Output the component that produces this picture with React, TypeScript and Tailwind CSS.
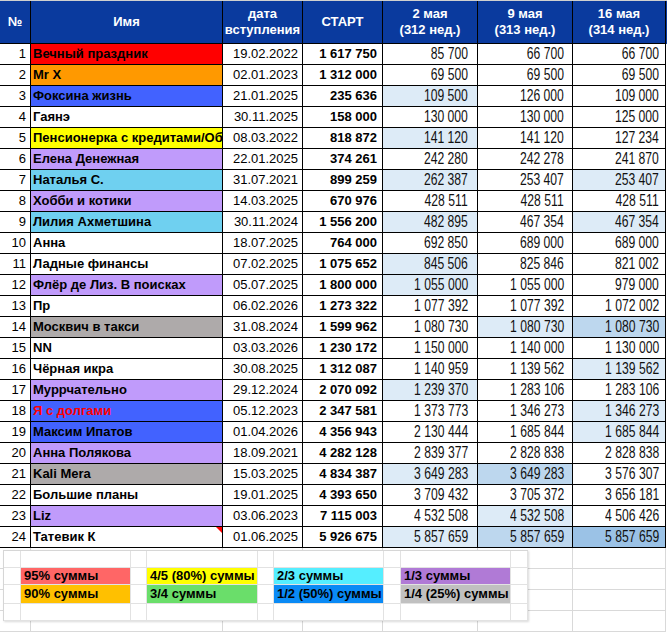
import React from "react";

type Row = {
  n: number;
  name: string;
  bg: string;
  fg?: string;
  date: string;
  start: string;
  v: [string, string, string];
  h: [string, string, string];
};

const L = "bg-[#ddebf7]";
const M = "bg-[#bdd7ee]";
const D = "bg-[#9bc2e6]";
const W = "bg-white";

const RED = "bg-[#ff0000]";
const ORG = "bg-[#ff9900]";
const BLU = "bg-[#4262ff]";
const YEL = "bg-[#ffff00]";
const LAV = "bg-[#c09bfb]";
const CYA = "bg-[#6fd0f0]";
const GRY = "bg-[#aeaaaa]";

const rows: Row[] = [
  { n: 1, name: "Вечный праздник", bg: RED, date: "19.02.2022", start: "1 617 750", v: ["85 700", "66 700", "66 700"], h: [W, W, W] },
  { n: 2, name: "Mr X", bg: ORG, date: "02.01.2023", start: "1 312 000", v: ["69 500", "69 500", "69 500"], h: [W, W, W] },
  { n: 3, name: "Фоксина жизнь", bg: BLU, date: "21.01.2025", start: "235 636", v: ["109 500", "126 000", "109 000"], h: [L, W, W] },
  { n: 4, name: "Гаянэ", bg: W, date: "30.11.2025", start: "158 000", v: ["130 000", "130 000", "125 000"], h: [W, W, W] },
  { n: 5, name: "Пенсионерка с кредитами/Обо", bg: YEL, date: "08.03.2022", start: "818 872", v: ["141 120", "141 120", "127 234"], h: [L, W, W] },
  { n: 6, name: "Елена Денежная", bg: LAV, date: "22.01.2025", start: "374 261", v: ["242 280", "242 278", "241 870"], h: [W, W, W] },
  { n: 7, name: "Наталья С.", bg: CYA, date: "31.07.2021", start: "899 259", v: ["262 387", "253 407", "253 407"], h: [L, W, L] },
  { n: 8, name: "Хобби и котики", bg: LAV, date: "14.03.2025", start: "670 976", v: ["428 511", "428 511", "428 511"], h: [W, W, W] },
  { n: 9, name: "Лилия Ахметшина", bg: CYA, date: "30.11.2024", start: "1 556 200", v: ["482 895", "467 354", "467 354"], h: [L, W, L] },
  { n: 10, name: "Анна", bg: W, date: "18.07.2025", start: "764 000", v: ["692 850", "689 000", "689 000"], h: [W, W, W] },
  { n: 11, name: "Ладные финансы", bg: W, date: "07.02.2025", start: "1 075 652", v: ["845 506", "825 846", "821 002"], h: [L, W, W] },
  { n: 12, name: "Флёр де Лиз. В поисках", bg: LAV, date: "05.07.2025", start: "1 800 000", v: ["1 055 000", "1 055 000", "979 000"], h: [L, W, W] },
  { n: 13, name: "Пр", bg: W, date: "06.02.2026", start: "1 273 322", v: ["1 077 392", "1 077 392", "1 072 002"], h: [W, W, W] },
  { n: 14, name: "Москвич в такси", bg: GRY, date: "31.08.2024", start: "1 599 962", v: ["1 080 730", "1 080 730", "1 080 730"], h: [W, L, M] },
  { n: 15, name: "NN", bg: W, date: "03.03.2026", start: "1 230 172", v: ["1 150 000", "1 140 000", "1 130 000"], h: [W, W, W] },
  { n: 16, name: "Чёрная икра", bg: W, date: "30.08.2025", start: "1 312 087", v: ["1 140 959", "1 139 562", "1 139 562"], h: [W, W, L] },
  { n: 17, name: "Муррчательно", bg: LAV, date: "29.12.2024", start: "2 070 092", v: ["1 239 370", "1 283 106", "1 283 106"], h: [L, W, W] },
  { n: 18, name: "Я с долгами", bg: BLU, fg: "text-[#ff0000]", date: "05.12.2023", start: "2 347 581", v: ["1 373 773", "1 346 273", "1 346 273"], h: [W, W, L] },
  { n: 19, name: "Максим Ипатов", bg: BLU, date: "01.04.2026", start: "4 356 943", v: ["2 130 444", "1 685 844", "1 685 844"], h: [W, W, L] },
  { n: 20, name: "Анна Полякова", bg: LAV, date: "18.09.2021", start: "4 282 128", v: ["2 839 377", "2 828 838", "2 828 838"], h: [W, W, W] },
  { n: 21, name: "Kali Mera", bg: GRY, date: "15.03.2025", start: "4 834 387", v: ["3 649 283", "3 649 283", "3 576 307"], h: [L, M, W] },
  { n: 22, name: "Большие планы", bg: W, date: "19.01.2025", start: "4 393 650", v: ["3 709 432", "3 705 372", "3 656 181"], h: [W, W, W] },
  { n: 23, name: "Liz", bg: LAV, date: "03.06.2023", start: "7 115 003", v: ["4 532 508", "4 532 508", "4 506 426"], h: [W, L, W] },
  { n: 24, name: "Татевик К", bg: W, date: "01.06.2025", start: "5 926 675", v: ["5 857 659", "5 857 659", "5 857 659"], h: [L, M, D] },
];

const GRID = "grid grid-cols-[31px_192px_80px_80px_95px_95px_93px]";
const body = { fontFamily: '"Liberation Sans", Arial, sans-serif' };

function Num({ v }: { v: string }) {
  return (
    <span className="inline-block origin-right scale-x-[0.76] text-[16px] leading-[18px] whitespace-nowrap text-[#111]">
      {v.split(" ").join("\u00a0")}
    </span>
  );
}

function Legend() {
  const cols = "grid grid-cols-[17px_110px_16px_111px_16px_110px_17px_110px_17px]";
  const cell = "border-r border-b border-[#e2e2e2] h-full";
  const blank = (k: string) => <div key={k} className={cell} />;
  const row1: [string, string][] = [
    ["95% суммы", "bg-[#ff6666]"],
    ["4/5 (80%) суммы", "bg-[#ffff00]"],
    ["2/3 суммы", "bg-[#55eeff]"],
    ["1/3 суммы", "bg-[#b07ad6]"],
  ];
  const row2: [string, string][] = [
    ["90% суммы", "bg-[#ffc000]"],
    ["3/4 суммы", "bg-[#6ade6a]"],
    ["1/2 (50%) суммы", "bg-[#0a8af5]"],
    ["1/4 (25%) суммы", "bg-[#c0c0c0]"],
  ];
  const renderRow = (items: [string, string][], h: string, key: string) => (
    <div key={key} className={`${cols} ${h}`}>
      {blank(key + "a")}
      {items.map(([t, c], i) => (
        <React.Fragment key={i}>
          <div className={`${cell} ${c} flex items-center pl-[3px] text-[13px] font-bold text-black whitespace-nowrap overflow-hidden`}>{t}</div>
          {blank(key + "b" + i)}
        </React.Fragment>
      ))}
    </div>
  );
  const emptyRow = (h: string, key: string) => (
    <div key={key} className={`${cols} ${h}`}>
      {Array.from({ length: 9 }).map((_, i) => blank(key + i))}
    </div>
  );
  return (
    <div className="absolute left-[3px] top-[550px] bg-white border-l border-t border-[#d6d6d6] shadow-[1px_1px_2px_rgba(0,0,0,0.15)]" style={body}>
      {emptyRow("h-[17px]", "e1")}
      {renderRow(row1, "h-[17px]", "r1")}
      {renderRow(row2, "h-[19px]", "r2")}
      {emptyRow("h-[17px]", "e2")}
    </div>
  );
}

export default function App() {
  return (
    <div className="relative w-[667px] h-[632px] bg-white overflow-hidden text-black" style={body}>
      <div className="border-t border-[#cfcfcf]">
        <div className={`${GRID} h-[43px] bg-[#0a3a9e] text-white font-bold text-[13px] leading-[16px]`}>
          <div className="border-r border-b border-black flex items-center justify-center">№</div>
          <div className="border-r border-b border-black flex items-center justify-center">Имя</div>
          <div className="border-r border-b border-black flex items-center justify-center text-center">дата<br />вступления</div>
          <div className="border-r border-b border-black flex items-center justify-center">СТАРТ</div>
          <div className="border-r border-b border-black flex items-center justify-center text-center">2 мая<br />(312 нед.)</div>
          <div className="border-r border-b border-black flex items-center justify-center text-center">9 мая<br />(313 нед.)</div>
          <div className="border-r border-b border-black flex items-center justify-center text-center">16 мая<br />(314 нед.)</div>
        </div>
        {rows.map((r) => (
          <div key={r.n} className={`${GRID} h-[21px] text-[13px]`}>
            <div className="border-r border-b border-black flex items-center justify-end pr-[4px]">{r.n}</div>
            <div className={`relative border-r border-b border-black flex items-center pl-[2px] font-bold whitespace-nowrap overflow-hidden ${r.bg} ${r.fg ?? "text-black"}`}>
              {r.name}
              {r.n === 24 && (
                <span className="absolute right-0 top-0 w-0 h-0 border-t-[6px] border-t-[#ff0000] border-l-[6px] border-l-transparent" />
              )}
            </div>
            <div className="border-r border-b border-black flex items-center justify-end pr-[4px]">{r.date}</div>
            <div className="border-r border-b border-black flex items-center justify-end pr-[5px] font-bold">{r.start}</div>
            <div className={`border-r border-b border-black flex items-center justify-end pr-[9px] ${r.h[0]}`}><Num v={r.v[0]} /></div>
            <div className={`border-r border-b border-black flex items-center justify-end pr-[8px] ${r.h[1]}`}><Num v={r.v[1]} /></div>
            <div className={`border-r border-b border-black flex items-center justify-end pr-[6px] ${r.h[2]}`}><Num v={r.v[2]} /></div>
          </div>
        ))}
        {[0, 1, 2, 3].map((i) => (
          <div key={i} className={`${GRID} h-[21px]`}>
            {Array.from({ length: 7 }).map((_, j) => (
              <div key={j} className="border-r border-b border-[#d9d9d9]" />
            ))}
          </div>
        ))}
      </div>
      <Legend />
    </div>
  );
}
